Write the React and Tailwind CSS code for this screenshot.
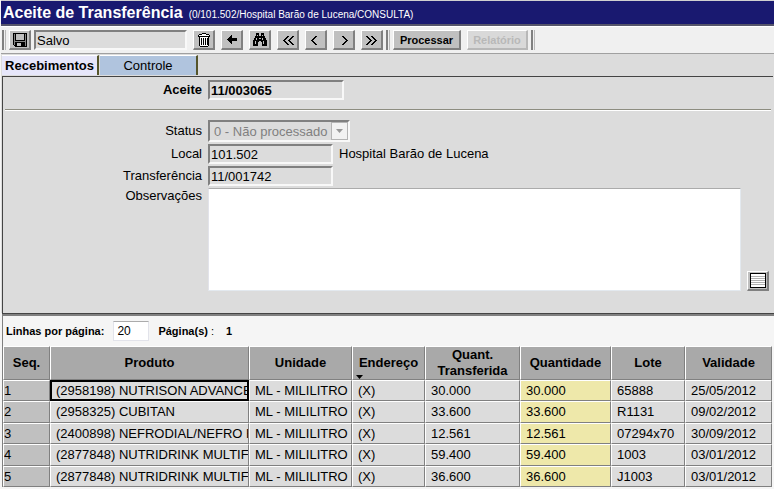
import React from "react";

const rows = [
  ["1", "(2958198) NUTRISON ADVANCED", "30.000", "65888", "25/05/2012"],
  ["2", "(2958325) CUBITAN", "33.600", "R1131", "09/02/2012"],
  ["3", "(2400898) NEFRODIAL/NEFRO HP", "12.561", "07294x70", "30/09/2012"],
  ["4", "(2877848) NUTRIDRINK MULTIFIBER", "59.400", "1003", "03/01/2012"],
  ["5", "(2877848) NUTRIDRINK MULTIFIBER", "36.600", "J1003", "03/01/2012"],
];

const raised =
  "border-t border-l border-b-2 border-r-2 border-t-white border-l-white border-b-[#808080] border-r-[#808080]";
const sunken =
  "h-5 rounded-none border-2 border-t-[#808080] border-l-[#808080] border-b-[#f8f8f8] border-r-[#f8f8f8] bg-[#dcdcdc] px-px text-[13px] leading-4 outline-none";

function Icon({ children }) {
  return (
    <svg width="16" height="16" viewBox="0 0 16 16" fill="none" shapeRendering="crispEdges" aria-hidden="true">
      {children}
    </svg>
  );
}

function ToolButton({ label, children }) {
  return (
    <button type="button" aria-label={label} className={`flex h-5 w-[22px] shrink-0 items-center justify-center bg-[#c0c0c0] ${raised}`}>
      {children}
    </button>
  );
}

function Separator() {
  return <div className="h-5 w-1 shrink-0 border-l-2 border-r border-l-[#808080] border-r-[#b8b8b8]" />;
}

function SaveIcon() {
  return (
    <Icon>
      <path d="M1 1h14v14H3l-2-2z" fill="#000" />
      <path d="M2 2h1v11H2zM13 2h1v12h-1z" fill="#858585" />
      <path d="M4 2h8v6H4z" fill="#c0c0c0" />
      <path d="M3 9h10v1H3z" fill="#858585" />
      <path d="M5 11h6v3H5z" fill="#c0c0c0" />
      <path d="M9 11h2v3H9z" fill="#000" />
    </Icon>
  );
}

function TrashIcon() {
  return (
    <Icon>
      <path d="M6 1h4v1H6zM3 2h10v1H3zM2 3h12v2H2zM3 5h10v9h-1v1H4v-1H3z" fill="#000" />
      <path d="M6 2h4v1H6zM3 3h10v1H3zM4 5h8v9H4z" fill="#fff" />
      <path d="M5 6h1v7H5zM7 6h1v7H7zM9 6h1v7H9zM11 6h1v7h-1z" fill="#000" />
    </Icon>
  );
}

function BackIcon() {
  return (
    <Icon>
      <path d="M3 7h1V6h1V5h1V4h1V3h1v3h5v3H8v3H7v-1H6v-1H5V9H4V8H3z" fill="#000" />
    </Icon>
  );
}

function BinocularsIcon() {
  return (
    <Icon>
      <path d="M4 1h3v3h2V1h3v3h1v2h1v2h1v6h-5v-4H9V9H7v1H6v4H1V8h1V6h1V4h1z" fill="#000" />
      <path d="M5 3h1v1H5zM10 3h1v1h-1zM4 6h1v2H4zM10 6h1v2h-1zM3 9h1v3H3zM11 9h1v3h-1zM7 6h2v1H7z" fill="#c0c0c0" />
    </Icon>
  );
}

const steps = [4, 3, 2, 1, 0, 1, 2, 3, 4];

// Stepped chevrons, two pixels thick on every row.
function Chevron({ starts, right }) {
  return (
    <Icon>
      {starts.map((start) =>
        steps.map((s, i) => (
          <rect key={`${start}-${i}`} x={start + (right ? 4 - s : s)} y={4 + i} width="2" height="1" fill="#000" />
        ))
      )}
    </Icon>
  );
}

function Field({ id, label, value, width, bold, children }) {
  return (
    <div className="flex items-center gap-[6px]">
      <label htmlFor={id} className={`w-[199px] shrink-0 text-right leading-4 ${bold ? "font-bold" : ""}`}>
        {label}
      </label>
      <input id={id} readOnly value={value} className={`${sunken} ${width} ${bold ? "font-bold" : ""}`} />
      {children}
    </div>
  );
}

const cell = "overflow-hidden whitespace-nowrap border border-t-white border-l-white border-b-[#808080] border-r-[#808080] p-0";

function Head({ children }) {
  return <th className={`relative bg-[#a9a9a9] text-center font-bold leading-4 ${cell}`}>{children}</th>;
}

function Cell({ children, color = "bg-[#dcdcdc]" }) {
  return <td className={`${cell} ${color}`}><div className="overflow-hidden pl-[5px] leading-4">{children}</div></td>;
}

export default function App() {
  return (
    <div className="min-h-screen bg-[#f5f5f5] pl-px font-['Liberation_Sans',Arial,sans-serif] text-[13px] text-black">
      <header className="flex h-[26px] items-center gap-[6px] border-t border-b-2 border-t-[#d0d0d0] border-b-[#55556a] bg-[#191970] pl-[2px] whitespace-nowrap text-white">
        <h1 className="text-base leading-5 font-bold">Aceite de Transferência</h1>
        <span className="pt-1 text-[10px] leading-4">(0/101.502/Hospital Barão de Lucena/CONSULTA)</span>
      </header>

      <div role="toolbar" className="flex h-7 items-center gap-[6px] border-t border-b border-t-white border-b-[#a0a0a0] bg-[#f0f0f0] pl-px">
        <div className="flex items-center gap-[3px]">
          <Separator />
          <ToolButton label="Salvar"><SaveIcon /></ToolButton>
          <input aria-label="Situação" readOnly value="Salvo" className={`${sunken} w-[153px]`} />
        </div>
        <ToolButton label="Excluir"><TrashIcon /></ToolButton>
        <ToolButton label="Voltar"><BackIcon /></ToolButton>
        <ToolButton label="Procurar"><BinocularsIcon /></ToolButton>
        <ToolButton label="Primeiro"><Chevron starts={[3, 8]} /></ToolButton>
        <ToolButton label="Anterior"><Chevron starts={[3]} /></ToolButton>
        <ToolButton label="Próximo"><Chevron starts={[6]} right /></ToolButton>
        <div className="flex items-center gap-[3px]">
          <ToolButton label="Último"><Chevron starts={[2, 7]} right /></ToolButton>
          <Separator />
          <button type="button" className={`h-5 w-[68px] bg-[#c0c0c0] text-[11px] leading-4 font-bold ${raised}`}>Processar</button>
        </div>
        <div className="flex items-center gap-[3px]">
          <button type="button" disabled className="h-5 w-[61px] border-t border-l border-r-2 border-b-2 border-t-white border-l-white border-r-[#b8b8b8] border-b-[#b8b8b8] bg-[#d9d9d9] text-[11px] leading-4 font-bold text-[#b8b8b8]">Relatório</button>
          <Separator />
        </div>
      </div>

      <div className="bg-[#dcdcdc] pt-px pr-px pl-px">
        <div role="tablist" className="flex h-[21px] gap-px">
          <button role="tab" aria-selected="true" type="button" className="h-5 w-[97px] border-t border-r-2 border-t-white border-r-[#55552b] bg-[#e6e6fa] leading-4 font-bold">Recebimentos</button>
          <button role="tab" aria-selected="false" type="button" className="h-5 w-[98px] border-t border-r-2 border-t-white border-r-[#55552b] bg-[#b0c4de] leading-4">Controle</button>
        </div>
        <section className="border-t border-l border-[#444] pt-[3px] pb-[22px]">
          <Field id="aceite" label="Aceite" value="11/003065" width="w-[136px]" bold />
          <hr className="mt-[9px] mr-[2px] mb-[9px] ml-[2px] h-[2px] border-t border-b border-t-[#8d8d80] border-b-white" />
          <div className="flex flex-col gap-[2px]">
            <div className="flex items-center gap-[6px]">
              <label htmlFor="status" className="w-[199px] text-right leading-4">Status</label>
              <div className="relative w-[142px]">
                <select id="status" disabled className="block h-[22px] w-full appearance-none border-2 border-t-[#808080] border-l-[#808080] border-r-[#f8f8f8] border-b-[#f8f8f8] bg-[#dcdcdc] pl-1 text-[#808080] opacity-100">
                  <option>0 - Não processado</option>
                </select>
                <span className="pointer-events-none absolute top-[2px] right-[2px] flex h-[18px] w-[17px] items-center justify-center border border-[#b4b4b4] bg-[#f2f2f2]">
                  <svg width="7" height="4" viewBox="0 0 7 4" aria-hidden="true"><path d="M0 0h7L3.500 4z" fill="#999" /></svg>
                </span>
              </div>
            </div>
            <Field id="local" label="Local" value="101.502" width="w-[125px]"><span>Hospital Barão de Lucena</span></Field>
            <Field id="transferencia" label="Transferência" value="11/001742" width="w-[125px]" />
            <div className="flex items-end gap-[6px] pr-1">
              <label htmlFor="observacoes" className="w-[199px] shrink-0 self-start text-right leading-4">Observações</label>
              <textarea id="observacoes" className="h-[103px] min-w-0 flex-1 resize-none border border-t-[#ababab] border-r-[#e3e9ef] border-b-[#e3e9ef] border-l-[#e2e3ea] bg-white outline-none" />
              <ToolButton label="Ampliar observações">
                <Icon>
                  <path d="M0 0h16v15H0z" fill="#000" />
                  <path d="M1 1h14v13H1z" fill="#fff" />
                  <path d="M1 3h14v1H1zM1 5h14v1H1zM1 7h14v1H1zM1 9h14v1H1zM1 11h14v1H1z" fill="#b0b0b0" />
                </Icon>
              </ToolButton>
            </div>
          </div>
        </section>
      </div>

      <section className="ml-px border-t border-[#444]">
        <div className="border-t-2 border-l border-[#808080] pr-[2px]">
          <div className="flex h-[30px] items-center pl-[3px] text-[11px] font-bold">
            <label htmlFor="linhas">Linhas por página:</label>
            <input id="linhas" defaultValue="20" className="ml-[9px] h-5 w-9 border border-[#e2e3ea] border-t-[#ababab] bg-white px-[3px] text-xs font-normal outline-none" />
            <span className="ml-[9px]">Página(s) <span className="font-normal">:</span></span>
            <span className="ml-3">1</span>
          </div>
          <table className="w-full table-fixed border-separate border-spacing-0">
            <colgroup>
              <col className="w-[47px]" />
              <col />
              <col className="w-[103px]" />
              <col className="w-[73px]" />
              <col className="w-[95px]" />
              <col className="w-[91px]" />
              <col className="w-[74px]" />
              <col className="w-[87px]" />
            </colgroup>
            <thead>
              <tr className="h-[34px]">
                <Head>Seq.</Head>
                <Head>Produto</Head>
                <Head>Unidade</Head>
                <Head>
                  Endereço
                  <svg className="absolute bottom-0 left-[3px]" width="7" height="4" viewBox="0 0 7 4" aria-hidden="true"><path d="M0 0h7L3.500 4z" fill="#000" /></svg>
                </Head>
                <Head>Quant.<br />Transferida</Head>
                <Head>Quantidade</Head>
                <Head>Lote</Head>
                <Head>Validade</Head>
              </tr>
            </thead>
            <tbody>
              {rows.map(([seq, produto, quant, lote, validade], i) => (
                <tr key={seq} className="odd:h-[21px] even:h-[22px]">
                  <td className={`${cell} bg-[#c0c0c0] leading-4`}>{seq}</td>
                  {i === 0 ? (
                    <td className="overflow-hidden border-2 border-black bg-[#dcdcdc] p-0 whitespace-nowrap"><div className="overflow-hidden pl-1 leading-4">{produto}</div></td>
                  ) : (
                    <Cell>{produto}</Cell>
                  )}
                  <Cell>ML - MILILITRO</Cell>
                  <Cell>(X)</Cell>
                  <Cell>{quant}</Cell>
                  <Cell color="bg-[#eee8aa]">{quant}</Cell>
                  <Cell>{lote}</Cell>
                  <Cell>{validade}</Cell>
                </tr>
              ))}
            </tbody>
          </table>
        </div>
      </section>
    </div>
  );
}
